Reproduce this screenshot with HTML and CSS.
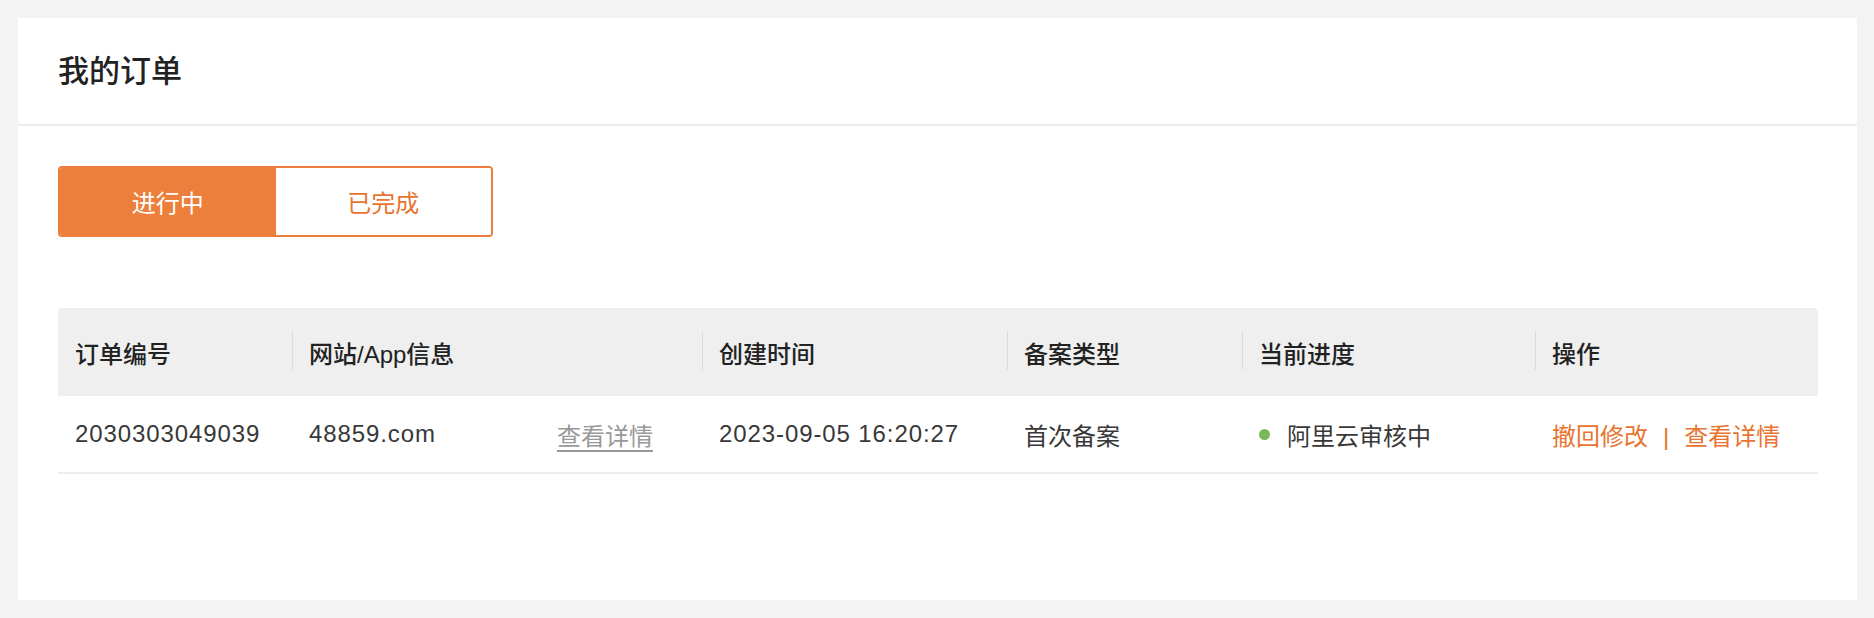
FILE: index.html
```html
<!DOCTYPE html>
<html lang="zh-CN">
<head>
<meta charset="utf-8">
<title>我的订单</title>
<link rel="stylesheet" href="styles.css">
</head>
<body>
<div class="card">
  <div class="card-header">
    <h1 class="title">我的订单</h1>
  </div>
  <div class="card-body">
    <div class="tabs">
      <div class="tab tab-active">进行中</div>
      <div class="tab">已完成</div>
    </div>
    <table class="orders">
      <colgroup>
        <col class="c1"><col class="c2"><col class="c3"><col class="c4"><col class="c5"><col class="c6">
      </colgroup>
      <thead>
        <tr>
          <th>订单编号</th>
          <th>网站/App信息</th>
          <th>创建时间</th>
          <th>备案类型</th>
          <th>当前进度</th>
          <th>操作</th>
        </tr>
      </thead>
      <tbody>
        <tr>
          <td><span class="num">2030303049039</span></td>
          <td>
            <div class="site">
              <span class="num">48859.com</span>
              <a class="detail-gray" href="#">查看详情</a>
            </div>
          </td>
          <td><span class="num">2023-09-05 16:20:27</span></td>
          <td>首次备案</td>
          <td><span class="status"><span class="dot"></span>阿里云审核中</span></td>
          <td class="actions"><a href="#">撤回修改</a><span class="sep">|</span><a href="#">查看详情</a></td>
        </tr>
      </tbody>
    </table>
  </div>
</div>
</body>
</html>
```
FILE: styles.css
```css
* { box-sizing: border-box; }
html, body { margin: 0; }
body {
  background: #f3f3f3;
  padding: 18px 17px 18px 18px;
  font-family: "Liberation Sans", "Noto Sans CJK SC", sans-serif;
  color: #333;
}
.card {
  background: #fff;
  height: 582px;
}
.card-header {
  height: 108px;
  border-bottom: 2px solid #ececec;
  display: flex;
  align-items: center;
  padding-left: 40px;
}
.title {
  margin: 0;
  font-size: 31px;
  font-weight: 500;
  color: #222;
  line-height: 1;
}
.card-body {
  padding: 40px 39px 0 40px;
}
.tabs {
  display: flex;
  width: 435px;
  height: 71px;
  border: 2px solid #ec7f3b;
  border-radius: 4px;
  overflow: hidden;
}
.tab {
  flex: 1;
  display: flex;
  align-items: center;
  justify-content: center;
  font-size: 24px;
  color: #e8742f;
  background: #fff;
}
.tab-active {
  background: #ec7f3b;
  color: #fff;
}
.orders {
  margin-top: 71px;
  width: 100%;
  table-layout: fixed;
  border-collapse: separate;
  border-spacing: 0;
  font-size: 24px;
}
.c1 { width: 234px; }
.c2 { width: 410px; }
.c3 { width: 305px; }
.c4 { width: 235px; }
.c5 { width: 293px; }
.c6 { width: auto; }
.orders th {
  background: #efefef;
  height: 88px;
  padding: 0 0 0 17px;
  text-align: left;
  font-weight: 500;
  color: #222;
  position: relative;
}
.orders th:first-child { border-top-left-radius: 4px; }
.orders th:last-child { border-top-right-radius: 4px; }
.orders th + th::before {
  content: "";
  position: absolute;
  left: 0;
  top: 23px;
  width: 1px;
  height: 39px;
  background: #dcdcdc;
}
.orders td {
  height: 78px;
  padding: 0 0 0 17px;
  border-bottom: 2px solid #ececec;
  color: #383838;
  white-space: nowrap;
}
.num { letter-spacing: 0.9px; }
.site {
  display: flex;
  align-items: center;
  padding-right: 49px;
}
.detail-gray {
  margin-left: auto;
  color: #999;
  text-decoration: underline;
  text-underline-offset: 5px;
}
.status {
  display: inline-flex;
  align-items: center;
}
.dot {
  width: 11px;
  height: 11px;
  border-radius: 50%;
  background: #78b75a;
  margin-right: 17px;
}
.actions a {
  color: #e8742f;
  text-decoration: none;
}
.actions .sep {
  color: #e8742f;
  margin: 0 15px;
}
```
